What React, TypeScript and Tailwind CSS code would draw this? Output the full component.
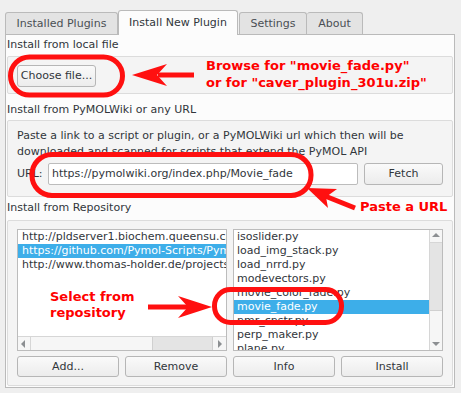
import React from "react";

const leftRepos = [
  "http://pldserver1.biochem.queensu.ca/~rlc/work/pymol/",
  "https://github.com/Pymol-Scripts/Pymol-script-repo",
  "http://www.thomas-holder.de/projects/pymol/repository/",
];

const scripts = [
  "isoslider.py",
  "load_img_stack.py",
  "load_nrrd.py",
  "modevectors.py",
  "movie_color_fade.py",
  "movie_fade.py",
  "nmr_cnstr.py",
  "perp_maker.py",
  "plane.py",
];

function Btn({ label, className = "" }: { label: string; className?: string }) {
  return (
    <div
      className={`flex items-center justify-center rounded-[3px] border border-[#b6b6b6] bg-gradient-to-b from-[#fafafa] to-[#ececec] text-[#31363b] ${className}`}
    >
      {label}
    </div>
  );
}

function Tri({ dir }: { dir: "up" | "down" | "left" | "right" }) {
  const pts = {
    up: "1,6 5,2 9,6",
    down: "1,3 5,7 9,3",
    left: "6,1 2,5 6,9",
    right: "3,1 7,5 3,9",
  }[dir];
  return (
    <svg width="10" height="10" viewBox="0 0 10 10">
      <polygon points={pts} fill="#8c8f92" />
    </svg>
  );
}

export default function App() {
  return (
    <div className="relative w-[461px] h-[393px] overflow-hidden bg-[#efefef] font-['DejaVu_Sans',sans-serif] text-[11px] leading-[16px] text-[#31363b]">
      <div className="pt-[10px] pl-[5px]">
        {/* tabs */}
        <div className="flex items-end h-[24px]">
          <div className="flex items-center justify-center w-[113px] h-[22px] rounded-t-[3px] border border-b-0 border-[#bababa] bg-[#e3e3e3] text-[#4a4f54]">
            Installed Plugins
          </div>
          <div className="relative z-10 -mb-px flex items-center justify-center w-[120px] h-[25px] rounded-t-[3px] border border-b-0 border-[#bababa] bg-[#fcfcfc]">
            Install New Plugin
          </div>
          <div className="ml-px flex items-center justify-center w-[68px] h-[22px] rounded-t-[3px] border border-b-0 border-[#bababa] bg-[#e3e3e3] text-[#4a4f54]">
            Settings
          </div>
          <div className="flex items-center justify-center w-[56px] h-[22px] rounded-t-[3px] border border-b-0 border-l-0 border-[#bababa] bg-[#e3e3e3] text-[#4a4f54]">
            About
          </div>
        </div>

        {/* panel */}
        <div className="flex flex-col w-[450px] h-[354px] border border-[#bababa] bg-[#fcfcfc] px-px">
          <div className="h-[21px] pt-[2px]">Install from local file</div>
          <div className="h-[38px] rounded-[2px] border border-[#dcdcdc] bg-[#f4f4f4] pt-[8px] pl-[9px]">
            <Btn label="Choose file..." className="w-[79px] h-[22px]" />
          </div>

          <div className="h-[26px] pt-[8px]">Install from PyMOLWiki or any URL</div>
          <div className="h-[77px] rounded-[2px] border border-[#dcdcdc] bg-[#f4f4f4] px-[9px] pt-[7px]">
            <div>
              Paste a link to a script or plugin, or a PyMOLWiki url which then will be
              <br />
              downloaded and scanned for scripts that extend the PyMOL API
            </div>
            <div className="mt-[3px] flex items-center h-[22px]">
              <div className="w-[31px]">URL:</div>
              <div className="flex items-center w-[310px] h-[22px] rounded-[2px] border border-[#bcbcbc] bg-white pl-[3px]">
                https://pymolwiki.org/index.php/Movie_fade
              </div>
              <Btn label="Fetch" className="ml-[6px] w-[79px] h-[22px]" />
            </div>
          </div>

          <div className="h-[23px] pt-[3px]">Install from Repository</div>
          <div className="h-[166px] rounded-[2px] border border-[#dcdcdc] bg-[#f4f4f4] pl-[9px] pt-[8px]">
            <div className="flex gap-[6px]">
              {/* left list */}
              <div className="flex flex-col w-[210px] h-[122px] border border-[#bcbcbc] bg-white">
                <div className="flex-1 overflow-hidden">
                  {leftRepos.map((r, i) => (
                    <div
                      key={r}
                      className={`h-[14px] leading-[14px] pl-[4px] whitespace-nowrap ${
                        i === 1 ? "bg-[#3daee9] text-white" : ""
                      }`}
                    >
                      {r}
                    </div>
                  ))}
                </div>
                <div className="flex h-[14px] border-t border-[#d6d6d6] bg-[#f6f6f6]">
                  <div className="flex items-center justify-center w-[13px] border-r border-[#d6d6d6]">
                    <Tri dir="left" />
                  </div>
                  <div className="flex-1 flex">
                    <div className="flex-1" />
                    <div className="w-[61px] bg-[#e4e4e4] border-x border-[#d0d0d0]" />
                  </div>
                  <div className="flex items-center justify-center w-[13px]">
                    <Tri dir="right" />
                  </div>
                </div>
              </div>

              {/* right list */}
              <div className="flex w-[210px] h-[122px] border border-[#bcbcbc] bg-white">
                <div className="flex-1 overflow-hidden">
                  {scripts.map((s) => (
                    <div
                      key={s}
                      className={`h-[14px] leading-[14px] pl-[3px] whitespace-nowrap ${
                        s === "movie_fade.py" ? "bg-[#3daee9] text-white" : ""
                      }`}
                    >
                      {s}
                    </div>
                  ))}
                </div>
                <div className="flex flex-col w-[13px] border-l border-[#d6d6d6] bg-[#f6f6f6]">
                  <div className="flex items-center justify-center h-[13px] border-b border-[#d6d6d6]">
                    <Tri dir="up" />
                  </div>
                  <div className="h-[68px] bg-[#e4e4e4] border-b border-[#d0d0d0]" />
                  <div className="flex-1" />
                  <div className="flex items-center justify-center h-[12px]">
                    <Tri dir="down" />
                  </div>
                </div>
              </div>
            </div>

            <div className="mt-[5px] flex gap-[6px]">
              <Btn label="Add..." className="w-[102px] h-[21px]" />
              <Btn label="Remove" className="w-[102px] h-[21px]" />
              <Btn label="Info" className="w-[102px] h-[21px]" />
              <Btn label="Install" className="w-[102px] h-[21px]" />
            </div>
          </div>
        </div>
      </div>

      {/* red annotations drawn over the dialog */}
      <svg className="absolute inset-0 pointer-events-none" width="461" height="393" viewBox="0 0 461 393">
        <g fill="none" stroke="#ff1010" strokeWidth="5">
          <rect x="10.5" y="57" width="112" height="38" rx="19" />
          <rect x="32" y="154.5" width="279" height="41" rx="20" />
          <rect x="214.5" y="289.5" width="127" height="33" rx="16" />
          <line x1="158" y1="75" x2="194" y2="75" />
          <line x1="148" y1="307" x2="188" y2="307" />
          <line x1="325" y1="196" x2="355" y2="208" />
        </g>
        <g fill="#ff1010">
          <polygon points="132,75 167,64 157,75 167,86" />
          <polygon points="212,307 178,296 188,307 178,318" />
          <polygon points="307,188 337,189 326,197 328,208" />
        </g>
      </svg>
      <div className="absolute left-[206px] top-[57px] font-['DejaVu_Sans',sans-serif] text-[13px] leading-[17px] font-bold text-[#ff0000] whitespace-nowrap">
        Browse for "movie_fade.py"
        <br />
        or for "caver_plugin_301u.zip"
      </div>
      <div className="absolute left-[360px] top-[199px] text-[13px] leading-[16px] font-bold text-[#ff0000] whitespace-nowrap">
        Paste a URL
      </div>
      <div className="absolute left-[50px] top-[289px] text-[13px] leading-[16px] font-bold text-[#ff0000] whitespace-nowrap">
        Select from
        <br />
        repository
      </div>
    </div>
  );
}
